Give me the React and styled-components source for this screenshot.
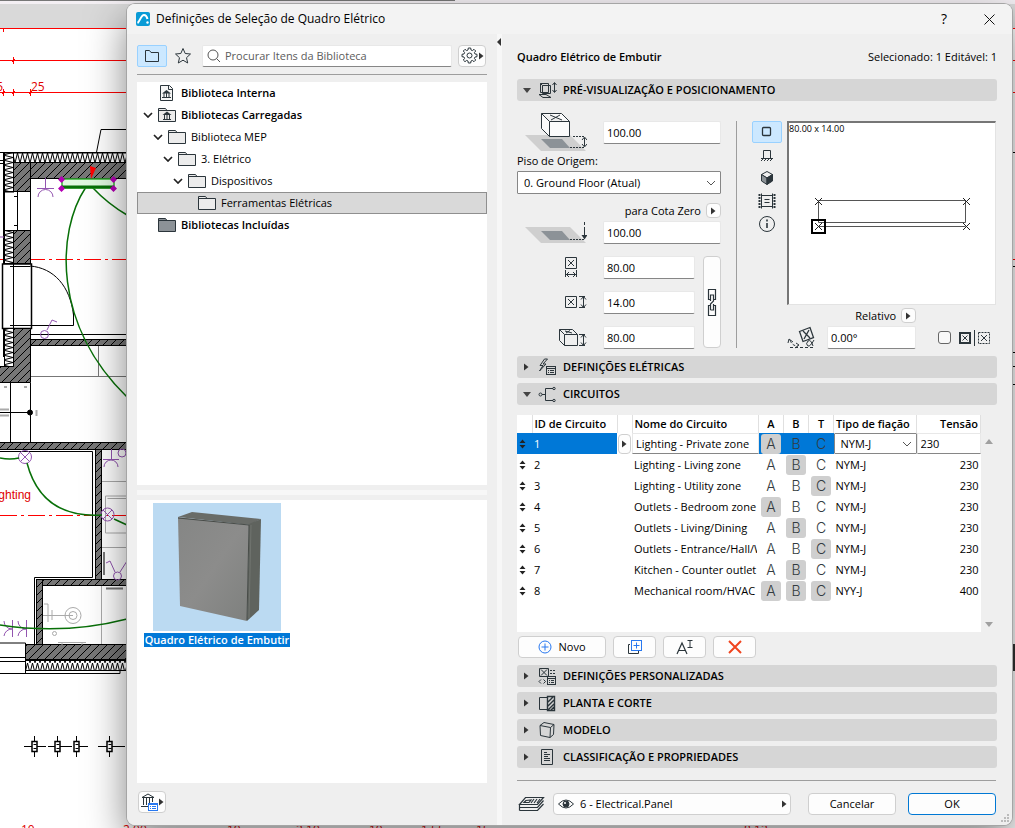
import React, { useState } from "react";
import styled, { createGlobalStyle } from "styled-components";

const GlobalStyle = createGlobalStyle`
  * {
    box-sizing: border-box;
  }

  body {
    margin: 0;
    color: #000;
    font-family: "Open Sans", "Noto Sans", sans-serif;
    font-size: 11px;
    line-height: 16px;
  }

  button,
  input,
  select {
    margin: 0;
    color: inherit;
    font: inherit;
  }

  svg {
    display: block;
    flex: none;
  }
`;

const Desktop = styled.div`
  position: relative;
  display: flex;
  min-height: 100vh;
  padding: 4px 3px 3px 127px;
  overflow: hidden;
  background: #fff;
`;

const PlanDrawing = styled.svg`
  position: absolute;
  top: 0;
  left: 0;
`;

const Dialog = styled.main`
  position: relative;
  display: flex;
  flex: 1;
  flex-direction: column;
  min-width: 0;
  overflow: hidden;
  border-radius: 8px;
  background: #efefef;
`;

const DialogShadow = styled.div`
  display: flex;
  flex: 1;
  min-width: 0;
  position: relative;
  border-radius: 8px;
  box-shadow:
    0 0 0 1px #a5a5a5,
    0 16px 40px rgba(0, 0, 0, 0.5);
`;

const TitleBar = styled.header`
  display: flex;
  align-items: center;
  gap: 6px;
  height: 30px;
  padding: 0 11px 0 9px;
  background: #f3f3f3;
`;

const Title = styled.h1`
  flex: 1;
  margin: 0;
  font-size: 12px;
  font-weight: 400;
`;

const TitleButton = styled.button`
  display: grid;
  place-items: center;
  width: 24px;
  height: 24px;
  margin-left: 15px;
  padding: 0;
  border: 0;
  background: none;
  font-size: 14px;
`;

const Columns = styled.div`
  display: flex;
  flex: 1;
`;

const LibraryPane = styled.section`
  display: flex;
  flex: 0 0 370px;
  flex-direction: column;
  padding: 10px 10px 9px;
`;

const PaneSplitter = styled.div`
  width: 5px;
  background: #f7f7f7;
`;

const Toolbar = styled.div`
  display: flex;
  align-items: center;
  gap: 6px;
  height: 31px;
  padding: 0 1px 7px 0;
  border-bottom: 1px solid #9d9d9d;
`;

const ToolButton = styled.button`
  display: grid;
  place-items: center;
  width: ${(props) => (props.$narrow ? "18px" : "30px")};
  height: 22px;
  padding: 0;
  border: 1px solid ${(props) => (props.$active ? "#99d1ff" : "transparent")};
  border-radius: 2px;
  background: ${(props) => (props.$active ? "#cce8ff" : "none")};
`;

const PlainButton = styled.button`
  display: flex;
  align-items: center;
  justify-content: center;
  gap: ${(props) => props.$gap || "0"};
  width: ${(props) => props.$width};
  height: ${(props) => props.$height || "22px"};
  padding: 0;
  border: 1px solid ${(props) => (props.$primary ? "#0078d4" : "#cfcfcf")};
  border-radius: 4px;
  background: #fdfdfd;
`;

const SearchBox = styled.label`
  display: flex;
  flex: 1;
  align-items: center;
  gap: 4px;
  height: 22px;
  margin-left: 5px;
  padding-left: 4px;
  border: 1px solid #e8e8e8;
  border-bottom-color: #868686;
  border-radius: 2px;
  background: #fff;
`;

const SearchInput = styled.input`
  flex: 1;
  min-width: 0;
  padding: 0;
  border: 0;
  background: none;

  &::placeholder {
    color: #5c5c5c;
    opacity: 1;
  }
`;

const Tree = styled.ul`
  height: 403px;
  margin: 7px 0 0;
  padding: 0;
  background: #fff;
  list-style: none;
`;

const TreeRow = styled.li`
  display: flex;
  align-items: center;
  gap: 5px;
  height: 22px;
  padding-left: ${(props) => 6 + props.$level * 10}px;
  background: ${(props) => (props.$selected ? "#d9d9d9" : "none")};
  box-shadow: ${(props) =>
    props.$selected ? "inset 0 0 0 1px #8f8f8f" : "none"};
  font-weight: ${(props) => (props.$bold ? 600 : 400)};
`;

const TreeChevron = styled.span`
  width: 10px;
`;

const ListSplitter = styled.div`
  height: 5px;
  margin: 5px 0;
  background: #f7f7f7;
`;

const ItemList = styled.div`
  flex: 1;
  padding: 3px 8px;
  background: #fff;
`;

const Item = styled.figure`
  display: flex;
  flex-direction: column;
  align-items: center;
  gap: 2px;
  width: 144px;
  margin: 0;
`;

const ItemName = styled.figcaption`
  padding: 0 1px;
  background: #0078d7;
  color: #fff;
  font-weight: 600;
  line-height: 14px;
  white-space: nowrap;
`;

const PaneFooter = styled.div`
  padding: 8px 1px 3px;
`;

const SettingsPane = styled.section`
  display: flex;
  flex: 1;
  flex-direction: column;
  min-width: 0;
  padding: 10px 15px;
`;

const Summary = styled.div`
  display: flex;
  align-items: center;
  justify-content: space-between;
  height: 26px;
  margin-bottom: 9px;

  strong {
    font-weight: 600;
  }
`;

const SectionHeader = styled.button`
  display: flex;
  align-items: center;
  width: 100%;
  height: 22px;
  margin-bottom: 5px;
  padding: 0 5px;
  border: 0;
  border-radius: 3px;
  background: #d6d6d6;
  font-weight: 600;
  text-align: left;
`;

const SectionArrow = styled.span`
  display: grid;
  place-items: center;
  width: 9px;
`;

const SectionIcon = styled.span`
  display: grid;
  place-items: center;
  width: 32px;
`;

const Placement = styled.div`
  display: grid;
  grid-template-columns: 204px 1px minmax(0, 1fr);
  gap: 15px;
  height: 250px;
  margin-right: 1px;
`;

const PlacementDivider = styled.div`
  margin: 15px 0 8px;
  background: #9d9d9d;
`;

const Fields = styled.div`
  display: flex;
  flex-direction: column;
  padding-top: 5px;
`;

const FieldRow = styled.div`
  display: flex;
  align-items: center;
  gap: 8px;
  height: ${(props) => props.$height};
`;

const FieldIcon = styled.span`
  display: flex;
  justify-content: flex-end;
  flex: 0 0 78px;
  padding-right: 8px;
`;

const TextInput = styled.input`
  flex: ${(props) => (props.$width ? "none" : 1)};
  width: ${(props) => props.$width || "100%"};
  min-width: 0;
  height: 23px;
  padding: 0 3px;
  border: 1px solid #e8e8e8;
  border-bottom-color: #868686;
  border-radius: 2px;
  background: #fff;
`;

const FloorLabel = styled.label`
  height: 18px;
`;

const SelectFrame = styled.div`
  display: grid;
  grid-template-columns: minmax(0, 1fr) 18px;
  align-items: center;
  width: 100%;
  height: ${(props) => props.$height};
  border: 1px solid #868686;
  border-radius: 1px;
  background: #fff;

  svg {
    grid-area: 1 / 2;
    justify-self: center;
    pointer-events: none;
  }
`;

const Select = styled.select`
  grid-area: 1 / 1 / 2 / 3;
  width: 100%;
  height: 100%;
  padding: 0 6px;
  border: 0;
  appearance: none;
  background: none;
`;

const MenuRow = styled.div`
  display: flex;
  align-items: center;
  justify-content: flex-end;
  gap: 5px;
  height: ${(props) => props.$height};
  padding-top: ${(props) => props.$top || "0"};
  padding-right: ${(props) => props.$inset || "0"};
`;

const SizeGroup = styled.div`
  display: flex;
  gap: 8px;
  padding-top: 6px;
`;

const SizeFields = styled.div`
  flex: 1;
`;

const ChainButton = styled(PlainButton)`
  width: 18px;
  height: 92px;
  margin-top: 6px;
`;

const ViewArea = styled.div`
  display: grid;
  grid-template-columns: 30px minmax(0, 1fr);
  grid-template-rows: 184px auto;
  column-gap: 5px;
  padding-top: 15px;
`;

const ViewModes = styled.div`
  display: flex;
  flex-direction: column;
  gap: 1px;
`;

const Preview = styled.div`
  border: 1px solid #e3e3e3;
  border-top: 2px solid #767676;
  border-left: 2px solid #767676;
  background: #fff;
  font-size: 9px;
  line-height: 12px;
`;

const AngleArea = styled.div`
  grid-column: 2;
`;

const AngleRow = styled.div`
  display: flex;
  align-items: center;
  gap: 8px;
  height: 23px;
`;

const MirrorLabel = styled.label`
  display: flex;
  align-items: center;
  gap: 7px;
  margin-left: 14px;
`;

const CheckBox = styled.input`
  width: 13px;
  height: 13px;
  margin: 0;
  border: 1px solid #666;
  border-radius: 3px;
  appearance: none;
  background: #f8f8f8;
`;

const CircuitArea = styled.div`
  display: flex;
  gap: 2px;
  margin-top: 5px;
  padding-right: 2px;
`;

const TableFrame = styled.div`
  flex: 1;
  min-width: 0;
  height: 217px;
  background: #fff;
`;

const Table = styled.table`
  width: 100%;
  border-collapse: collapse;
  table-layout: fixed;
`;

const Col = styled.col`
  width: ${(props) => props.$width};
`;

const HeadCell = styled.th`
  height: 18px;
  padding: 0 2px;
  overflow: hidden;
  border-right: 1px solid #e0e0e0;
  font-weight: 600;
  line-height: 18px;
  text-align: ${(props) => props.$align || "left"};
  white-space: nowrap;
`;

const Cell = styled.td`
  height: 21px;
  padding: ${(props) => (props.$flush ? "0" : "0 2px")};
  overflow: hidden;
  background: ${(props) => (props.$marked ? "#0078d7" : "none")};
  color: ${(props) => (props.$marked ? "#fff" : "#000")};
  line-height: 20px;
  text-align: ${(props) => props.$align || "left"};
  white-space: nowrap;
`;

const CellText = styled.div`
  overflow: hidden;
`;

const RowMenuButton = styled(PlainButton)`
  width: 13px;
  height: 20px;
  margin: 0 auto;
`;

const CellInput = styled.input`
  display: block;
  width: 100%;
  height: 21px;
  padding: 0 3px;
  border: 1px solid #e8e8e8;
  border-bottom-color: #868686;
  background: #fff;
`;

const PhaseButton = styled.button`
  display: grid;
  place-items: center;
  width: 20px;
  height: 20px;
  margin: 0 auto;
  padding: 0;
  border: 0;
  border-radius: 3px;
  background: ${(props) => (props.$on ? "#cfcfcf" : "none")};
  color: #333b40;
  font-family: Inter, "Open Sans", sans-serif;
  font-size: 14px;
  font-weight: 300;
  line-height: 20px;
`;

const ScrollArrows = styled.div`
  display: flex;
  flex-direction: column;
  align-items: center;
  justify-content: space-between;
  width: 12px;
  padding: 24px 0 5px;
`;

const CircuitActions = styled.div`
  display: flex;
  gap: 7px;
  padding: 4px 1px 7px;
`;

const Footer = styled.footer`
  display: flex;
  align-items: center;
  gap: 12px;
  margin: auto 1px 0 0;
  padding-top: 12px;
  border-top: 1px solid #9d9d9d;
`;

const LayerButton = styled(PlainButton)`
  flex: 1;
  gap: 6px;
  margin-left: -4px;
  margin-right: 5px;
  padding: 0 3px 0 4px;

  span {
    flex: 1;
    text-align: left;
  }
`;

const ResizeGrip = styled.svg`
  position: absolute;
  right: 2px;
  bottom: 2px;
`;

const INK = "#2b353b";

const ArrowRight = ({ color = "#333" }) => (
  <svg width="5" height="8">
    <path d="M0 0.5 L4.5 4 L0 7.5 Z" fill={color} />
  </svg>
);

const ArrowDown = ({ color = "#444", up = false }) => (
  <svg width="8" height="5">
    <path d={up ? "M0 5 L4 0 L8 5 Z" : "M0 0 L8 0 L4 5 Z"} fill={color} />
  </svg>
);

const Chevron = ({ bold }) => (
  <svg width="10" height="6" fill="none">
    <path
      d="M1 1 L5 5 L9 1"
      stroke={bold ? "#222" : "#555"}
      strokeWidth={bold ? 1.7 : 1}
    />
  </svg>
);

const FolderIcon = ({ kind }) => {
  if (kind === "internal") {
    return (
      <svg width="18" height="18" fill="none" stroke={INK}>
        <path d="M2.5 1.5 H11.5 L14.5 4.5 V16.5 H2.5 Z" fill="#f5f5f5" />
        <path d="M10.5 1.5 V5.5 H14.5" />
        <path d="M8.5 6 L13 9.5 H4 Z" fill={INK} stroke="none" />
        <path d="M6 9 V13 M8.5 9 V13 M11 9 V13 M4 13.5 H13" />
      </svg>
    );
  }
  return (
    <svg width="18" height="18" fill="none" stroke={INK}>
      <path
        d="M0.5 15.5 V2.5 H7.5 L9 4.5 H17.5 V15.5 Z"
        fill={kind === "dark" ? "#8c9297" : "#ececec"}
      />
      <path d="M1 4.5 H9" />
      {kind === "library" && (
        <>
          <path d="M9 5.5 L13.5 9 H4.5 Z" fill={INK} stroke="none" />
          <path d="M6.5 9 V13 M9 9 V13 M11.5 9 V13 M5 13.5 H13" />
        </>
      )}
    </svg>
  );
};

const AppLogo = () => (
  <svg width="14" height="14" fill="none">
    <rect width="14" height="14" rx="2" fill="#0a9bd6" />
    <path
      d="M1.5 11 C3.5 10 5 3 8 3 C10.5 3 11 5 11.5 7"
      stroke="#fff"
      strokeWidth="2"
    />
    <circle cx="11.5" cy="10.5" r="1.2" fill="#fff" />
  </svg>
);

const GearIcon = () => (
  <svg width="17" height="17" viewBox="0 0 17 17" fill="none" stroke={INK}>
    <path d="M7.3 1 H9.7 L10 3 L11.4 3.6 L13 2.3 L14.7 4 L13.4 5.6 L14 7 L16 7.3 V9.7 L14 10 L13.4 11.4 L14.7 13 L13 14.7 L11.4 13.4 L10 14 L9.7 16 H7.3 L7 14 L5.6 13.4 L4 14.7 L2.3 13 L3.6 11.4 L3 10 L1 9.7 V7.3 L3 7 L3.6 5.6 L2.3 4 L4 2.3 L5.6 3.6 L7 3 Z" />
    <circle cx="8.5" cy="8.5" r="2.5" />
  </svg>
);

const LibraryManagerIcon = () => (
  <svg width="19" height="19" fill="none" stroke={INK}>
    <path d="M2 4.5 L8 1 L14 4.5 Z M3.5 5 V12 M6.5 5 V12 M9.5 5 V10 M12.5 5 V9 M1 13.5 H8" />
    <rect x="8.5" y="10.5" width="9" height="7" fill="#fff" stroke="#2878f0" />
    <path
      d="M9 11.5 H17 M10 13.5 H11 M12 13.5 H16 M10 15.5 H11 M12 15.5 H16"
      stroke="#2878f0"
    />
  </svg>
);

const CabinetPicture = () => (
  <svg width="128" height="128">
    <defs>
      <linearGradient id="door" x1="0" y1="0" x2="1" y2="1">
        <stop offset="0" stopColor="#858685" />
        <stop offset="0.5" stopColor="#8c8c8b" />
        <stop offset="1" stopColor="#7e807e" />
      </linearGradient>
    </defs>
    <rect width="128" height="128" fill="#bbdaf2" />
    <path d="M25 14 L39 9 L108 16 L97 22 Z" fill="#696c68" />
    <path d="M96 21 L108 16 L106 107 L94 118 Z" fill="#5f635e" />
    <path d="M25 14 L96 22 L94 118 L27 103 Z" fill="url(#door)" />
    <path d="M25 15 L96 22 L94 117" fill="none" stroke="#484c48" />
    <path d="M98 22 L96 115" fill="none" stroke="#70746f" />
  </svg>
);

const SECTION_ICONS = {
  preview: (
    <>
      <path d="M2.5 2.5 H10.5 V11.5 H2.5 Z M4.5 4.5 H12.5 V12.5 H4.5 Z M2.5 2.5 L4.5 4.5 M1 13.5 H8 L13 16.5 H5 Z" />
      <path d="M16.5 2 V11 M14.5 4 L16.5 1.5 L18.5 4 M14.5 9 L16.5 11.5 L18.5 9" />
    </>
  ),
  electric: (
    <>
      <path d="M6.5 1 L2 7.5 H5 L1.5 13 L8 6 H5 L9.5 1 Z" />
      <rect x="8.5" y="8.5" width="9" height="8" />
      <path d="M9 10.5 H17 M10 12.5 H11 M12 12.5 H16 M10 14.5 H11 M12 14.5 H16" />
    </>
  ),
  circuits: (
    <>
      <circle cx="2.5" cy="9.5" r="1.5" />
      <path d="M4 9.5 H7.5 M15 3.5 H7.5 V15.5 H15" />
      <circle cx="16" cy="3.5" r="1.2" />
      <circle cx="16" cy="15.5" r="1.2" />
    </>
  ),
  custom: (
    <>
      <path d="M1.5 1.5 H10.5 V9.5 H1.5 Z M3 2.5 L9 8.5 M9 2.5 L3 8.5 M12 3.5 H14 M15 3.5 H17 M12 6.5 H14 M15 6.5 H17" />
      <path d="M3 12.5 L1 14.5 L3 16.5 M5.5 12.5 L7.5 14.5 L5.5 16.5" />
      <rect x="9.5" y="9.5" width="8" height="8" fill="#d6d6d6" />
      <path d="M10 11.5 H17 M11 13.5 H12 M13 13.5 H16 M11 15.5 H12 M13 15.5 H16" />
    </>
  ),
  plan: (
    <>
      <path d="M9.5 3.5 H1.5 V15.5 H9.5" />
      <path
        d="M9.5 2.5 H16.5 V16.5 H9.5 Z M10 8 L15 3 M10 12 L16 6 M10 16 L16 10 M13 16 L16 13"
        strokeWidth="1.4"
      />
    </>
  ),
  model: (
    <path d="M2 4.5 L6 1.5 L16 3.5 L12.5 6.5 Z M2 4.5 L2.5 14.5 L12 16.5 L12.5 6.5 M16 3.5 L15.5 13.5 L12 16.5" />
  ),
  classification: (
    <path d="M3.5 1.5 H14.5 V16.5 H3.5 Z M6 4.5 H9 M6 6.5 H12 M6 8.5 H10 M6 10.5 H12 M6 12.5 H12" />
  ),
};

const ElevationIcon = ({ box }) => (
  <svg width="62" height={box ? 40 : 24} fill="none" stroke={INK}>
    <g transform={box ? "translate(0 17)" : ""}>
      <path d="M0 6 H45 L61 22 H16 Z" fill="#cfcfcf" stroke="none" />
      <path d="M16 10 H37 L45 19 H25 Z" fill="#8c9297" stroke="none" />
      {box ? (
        <>
          <path d="M48 7.5 H60 M45 18.5 H60" strokeDasharray="2 1" />
          <path d="M59.5 9 V17 M57 11 L59.5 8 L62 11 M57 15 L59.5 18 L62 15" />
        </>
      ) : (
        <>
          <path d="M45 18.5 H60" strokeDasharray="2 1" />
          <path d="M59.5 1 V4 M59.5 6 V17" />
          <path d="M56.5 14 L59.5 18.5 L62.5 14 Z" fill={INK} stroke="none" />
        </>
      )}
    </g>
    {box && (
      <path
        d="M16.5 1.5 H36.5 L44.5 9.5 V24.5 H24.5 L16.5 16.5 Z M16.5 1.5 L24.5 9.5 H44.5 M24.5 9.5 V24.5 M25 3 L37 8 M35 3 L26 8"
        fill="#fbfbfb"
      />
    )}
  </svg>
);

const SizeIcon = ({ kind }) => {
  const icons = {
    width: (
      <path d="M6.5 0.5 H17.5 V11.5 H6.5 Z M9 3 L15 9 M15 3 L9 9 M6.5 13 V20 M17.5 13 V20 M7 17.5 H17 M10 15 L7.5 17.5 L10 20 M14 15 L16.5 17.5 L14 20" />
    ),
    depth: (
      <path d="M6.5 4.5 H17.5 V15.5 H6.5 Z M9 7 L15 13 M15 7 L9 13 M20 4.5 H26 M20 15.5 H26 M24.5 5 V15 M22 7.5 L24.5 4.5 L27 7.5 M22 12.5 L24.5 15.5 L27 12.5" />
    ),
    height: (
      <path d="M0.5 2.5 H13.5 L18.5 7.5 V18.5 H5.5 L0.5 13.5 Z M0.5 2.5 L5.5 7.5 H18.5 M5.5 7.5 V18.5 M6 4 L13 6 M11 3.5 L7 6 M20 7.5 H26 M20 18.5 H26 M24.5 8 V18 M22 10.5 L24.5 7.5 L27 10.5 M22 15.5 L24.5 18.5 L27 15.5" />
    ),
  };
  return (
    <svg width="28" height="21" fill="none" stroke={INK}>
      {icons[kind]}
    </svg>
  );
};

const VIEW_MODES = [
  {
    name: "Planta",
    icon: <rect x="4.5" y="4.5" width="8" height="8" rx="1" strokeWidth="1.3" />,
  },
  {
    name: "Alçado",
    icon: (
      <path d="M5.5 12 V4.5 H12.5 V12 M3 12.5 H15 M3 15 L5 13 M6 15 L8 13 M9 15 L11 13 M12 15 L14 13" />
    ),
  },
  {
    name: "3D",
    icon: (
      <>
        <path d="M3.5 5.5 L9 2.5 L14.5 5.5 L9 9 Z" fill="#eee" />
        <path d="M3.5 5.5 L9 9 V15.5 L3.5 12 Z" fill="#8c9297" />
        <path d="M14.5 5.5 L9 9 V15.5 L14.5 12 Z" fill={INK} />
      </>
    ),
  },
  {
    name: "Imagem",
    icon: (
      <>
        <path d="M1.5 2 V16 M16.5 2 V16" strokeWidth="2" strokeDasharray="2 1" />
        <path d="M3.5 1.5 V16.5 M14.5 1.5 V16.5 M3.5 3.5 H14.5 M3.5 14.5 H14.5 M6.5 7.5 H11.5 M6.5 10.5 H11.5" />
      </>
    ),
  },
  {
    name: "Informação",
    icon: (
      <>
        <circle cx="9" cy="9" r="7.5" />
        <path d="M9 8 V13 M9 4.5 V6.5" strokeWidth="1.6" />
      </>
    ),
  },
];

const CROSS = "l7 7 m0 -7 l-7 7";

const SymbolPreview = () => (
  <svg width="100%" height="166" viewBox="0 0 206 166" fill="none" stroke="#222">
    <path d="M29.5 65.5 H176.5 V87.5 H29.5 Z M29.5 91.5 H176.5" stroke="#555" />
    <path d={`M26 63 ${CROSS} M174 63 ${CROSS} M26 88 ${CROSS} M174 88 ${CROSS}`} />
    <rect x="23" y="85" width="13" height="13" stroke="#000" strokeWidth="2" />
  </svg>
);

const sections = [
  ["custom", "DEFINIÇÕES PERSONALIZADAS"],
  ["plan", "PLANTA E CORTE"],
  ["model", "MODELO"],
  ["classification", "CLASSIFICAÇÃO E PROPRIEDADES"],
];

const tree = [
  { name: "Biblioteca Interna", level: 0, kind: "internal", bold: true },
  { name: "Bibliotecas Carregadas", level: 0, kind: "library", bold: true, open: true },
  { name: "Biblioteca MEP", level: 1, open: true },
  { name: "3. Elétrico", level: 2, open: true },
  { name: "Dispositivos", level: 3, open: true },
  { name: "Ferramentas Elétricas", level: 4 },
  { name: "Bibliotecas Incluídas", level: 0, kind: "dark", bold: true },
];

const circuits = [
  { id: 1, name: "Lighting - Private zone", phases: "A", wiring: "NYM-J", voltage: 230 },
  { id: 2, name: "Lighting - Living zone", phases: "B", wiring: "NYM-J", voltage: 230 },
  { id: 3, name: "Lighting - Utility zone", phases: "C", wiring: "NYM-J", voltage: 230 },
  { id: 4, name: "Outlets - Bedroom zone", phases: "A", wiring: "NYM-J", voltage: 230 },
  { id: 5, name: "Outlets - Living/Dining", phases: "B", wiring: "NYM-J", voltage: 230 },
  { id: 6, name: "Outlets - Entrance/Hall/W", phases: "C", wiring: "NYM-J", voltage: 230 },
  { id: 7, name: "Kitchen - Counter outlet", phases: "B", wiring: "NYM-J", voltage: 230 },
  { id: 8, name: "Mechanical room/HVAC", phases: "ABC", wiring: "NYY-J", voltage: 400 },
];

const FloorPlan = () => (
  <PlanDrawing width="1015" height="828" fill="none" stroke="#000">
    <defs>
      <pattern id="masonry" width="8" height="8" patternUnits="userSpaceOnUse">
        <rect width="8" height="8" fill="#777" stroke="none" />
        <path d="M-2 10 L10 -2 M-2 2 L2 -2 M6 10 L10 6" />
      </pattern>
      <pattern id="zigzag" width="5" height="10" y="3" patternUnits="userSpaceOnUse">
        <rect width="5" height="10" fill="#fff" stroke="none" />
        <path d="M0 10 L2.5 0 L5 10" />
      </pattern>
      <pattern id="zigzagV" width="10" height="5" x="3" patternUnits="userSpaceOnUse">
        <rect width="10" height="5" fill="#fff" stroke="none" />
        <path d="M0 0 L10 2.5 L0 5" />
      </pattern>
    </defs>
    <rect width="1015" height="28" fill="#d9d9d9" stroke="none" />
    <rect width="1015" height="4" fill="#f3eff3" stroke="none" />
    <path d="M0 0.5 H455" stroke="#777" />

    <g stroke="#f00">
      <path d="M0 28.5 H127 M0 60.5 H127 M0 92.5 H127 M13.5 57 V64 M3.5 28 V32 M3.5 89 V96 M13.5 89 V96 M30.5 89 V96 M12 62 L15 59 M2 94 L5 91 M12 94 L15 91 M29 94 L32 91" />
      <path d="M0 259.5 H127 M0 515.5 H127" strokeDasharray="17 4 3 4" />
      <path d="M1012 28.5 H1015 M1012 60.5 H1015 M1012 92.5 H1015 M1012 259.5 H1015" />
    </g>

    <path d="M94 165 L101 129.5 H127 M0 152.5 H127" />
    <rect x="13.5" y="153" width="114" height="10" fill="url(#zigzag)" />
    <rect x="4.5" y="153" width="9" height="39" fill="url(#zigzagV)" />
    <rect x="13.5" y="162.5" width="114" height="16" fill="url(#masonry)" />
    <rect x="13.5" y="162.5" width="17" height="29" fill="url(#masonry)" />
    <path d="M4.5 191.5 H30.5 M4.5 230.5 H30.5 M30.5 191 V230 M17.5 191 V230 M14 196.5 H17 M14 225.5 H17 M0 160.5 H4 M0 163.5 H4" />
    <rect x="4.5" y="230.5" width="9" height="33" fill="url(#zigzagV)" />
    <rect x="13.5" y="230.5" width="17" height="33" fill="url(#masonry)" />
    <path d="M2.5 264 H31.5 V328.5 H2.5 Z" strokeWidth="1.5" fill="#fff" />
    <path d="M13.5 264 V328 M10 266.5 H30 M10 325.5 H73.5 V310 M30 266 C54 268 70 286 73.5 315" />
    <path d="M4 153 V264 M4 328 V357" strokeWidth="2" />
    <rect x="4.5" y="328.5" width="9" height="38" fill="url(#zigzagV)" />
    <path d="M13.5 328.5 H30.5 V382.5 H-1 V366.5 H13.5 Z" fill="url(#masonry)" />
    <path d="M31 334.5 H127" />
    <rect x="30.5" y="339.5" width="97" height="6" fill="url(#masonry)" />
    <path d="M31 376.5 H127 M98.5 346 V376" stroke="#777" />
    <path d="M10.5 383 V442 M30.5 383 V442 M0 412.5 H30" />
    <circle cx="30" cy="412.5" r="2.5" fill="#000" />
    <path
      d="M0 409.5 H9 M0 415.5 H9 M36.5 410 V416 M4 387 H7 M24 387 H27"
      stroke="#aaa"
      strokeWidth="2"
    />

    <rect x="-1" y="442.5" width="129" height="7" fill="url(#masonry)" />
    <path d="M0 451.5 H92.5 V577.5 H34.5 V644" />
    <rect x="95.5" y="449.5" width="6" height="130" fill="url(#masonry)" />
    <rect x="36.5" y="579.5" width="91" height="6" fill="url(#masonry)" />
    <rect x="36.5" y="579.5" width="6" height="65" fill="url(#masonry)" />
    <rect x="25.5" y="644.5" width="102" height="15" fill="url(#masonry)" />
    <rect x="25.5" y="660.5" width="102" height="10" fill="url(#zigzag)" />
    <path d="M0 643 H25.5 V673.5 M0 657.5 H25 M0 661.5 H25 M0 673.5 H120 V671 M26 670.5 H127" />

    <g stroke="#aaa">
      <path d="M102 481.5 H127 M102 547.5 H127 M105.5 496 H127 M105.5 496 V533 H127 M107.5 498.5 H127 M101.5 586 V644 M43 615.5 H73 M44 604 H48 V622 M52 610 V620 M58 642.5 H86 M62 642 V645 M82 642 V645" />
      <circle cx="73" cy="615.5" r="8" />
      <circle cx="73" cy="615.5" r="4" />
      <circle cx="54.5" cy="633.5" r="2" />
      <path d="M104 552 V575 M106 588.5 H123" stroke="#777" strokeWidth="2" />
    </g>
    <g stroke="#9355b0">
      <path d="M37 188.5 H54 M45.5 178 V188 M38 197 A7.5 7.5 0 0 1 53 197 M47 330 L52 320 L57 322" />
      <circle cx="44.5" cy="334.5" r="4" />
      <circle cx="25" cy="457" r="6.5" />
      <path d="M20.5 452.5 L29.5 461.5 M29.5 452.5 L20.5 461.5" />
      <circle cx="107.5" cy="514.5" r="6.5" />
      <path d="M103 510 L112 519 M112 510 L103 519 M103 459.5 H119 M111.5 449 V459 M104 467 A7 7 0 0 1 118 467 M106 563 L110 561 L115 572 M120 572 L127 561" />
      <circle cx="117.5" cy="576" r="4" />
      <circle cx="122" cy="453" r="4" />
      <path d="M12.5 620 V637 M4 621 A8 8 0 0 0 12 629 A8 8 0 0 0 4 636 M26.5 620 V637 M18 621 A8 8 0 0 0 26 629 A8 8 0 0 0 18 636 M0 237 H4" />
    </g>
    <g stroke="#087008" strokeWidth="1.5">
      <path d="M86 187 C56 232 53 325 127 397 M92 187 Q108 204 127 215 M0 458 Q10 460 19 458 M27 463 C38 505 68 517 102 515 M114 519 L127 525 M0 625 Q65 635 127 619" />
      <rect x="62" y="179" width="52" height="9" fill="#dff8df" stroke="#35b135" />
      <path d="M62 187 H114" strokeWidth="3" />
    </g>
    <path d="M90 166 L96 168 L91 179 Z" fill="#f00" stroke="none" />
    <path
      d="M61.5 176 l3.5 3.5 l-3.5 3.5 l-3.5 -3.5 z M61.5 185 l3.5 3.5 l-3.5 3.5 l-3.5 -3.5 z M113.5 176 l3.5 3.5 l-3.5 3.5 l-3.5 -3.5 z M113.5 185 l3.5 3.5 l-3.5 3.5 l-3.5 -3.5 z"
      fill="#b400b4"
      stroke="none"
    />

    <path d="M24 746.5 H46 M48 746.5 H72 M75 746.5 H88 M98 746.5 H125 M126.5 741 V752" />
    {[34.5, 57.5, 76.5, 109.5].map((x) => (
      <g key={x}>
        <path d={`M${x} 736 V757`} />
        <rect x={x - 2.5} y="741.5" width="5" height="10" fill="#fff" strokeWidth="1.5" />
        <path d={`M${x - 1} 744.5 H${x + 2} M${x - 1} 748.5 H${x + 2}`} />
      </g>
    ))}
    <path d="M1012 152.5 H1015 M1012 266.5 H1015 M1012 352.5 H1015 M1012 366.5 H1015 M1012 384.5 H1015" />
    <rect x="1012" y="644" width="3" height="27" fill="#333" stroke="none" />

    <g fill="#e00000" stroke="none" fontFamily="Open Sans, sans-serif" fontSize="12">
      <text x="31" y="91">25</text>
      <text x="3" y="91" textAnchor="end">5</text>
      <text x="31" y="499" textAnchor="end" fontFamily="Liberation Sans, sans-serif">
        Lighting
      </text>
      <text x="21" y="834">10</text>
      <text x="123" y="834">2.00</text>
      <text x="227" y="834">10</text>
      <text x="296" y="834">2.10</text>
      <text x="369" y="834">10</text>
      <text x="421" y="834">1.55</text>
      <text x="476" y="834">15</text>
      <text x="744" y="834">8.12</text>
    </g>
  </PlanDrawing>
);

const Section = ({ icon, title, open, onToggle }) => (
  <SectionHeader type="button" aria-expanded={!!open} onClick={onToggle}>
    <SectionArrow>{open ? <ArrowDown /> : <ArrowRight />}</SectionArrow>
    <SectionIcon>
      <svg width="19" height="18" fill="none" stroke={INK}>
        {SECTION_ICONS[icon]}
      </svg>
    </SectionIcon>
    {title}
  </SectionHeader>
);

const Library = () => {
  const [selected, setSelected] = useState("Ferramentas Elétricas");

  return (
    <LibraryPane>
      <Toolbar>
        <ToolButton type="button" $active aria-label="Pastas">
          <svg width="16" height="14" fill="none" stroke={INK}>
            <path d="M1.5 12.5 V1.5 H5.5 L7 3.5 H14.5 V12.5 Z" />
          </svg>
        </ToolButton>
        <ToolButton type="button" $narrow aria-label="Favoritos">
          <svg width="18" height="18" fill="none" stroke={INK}>
            <path d="M9 1.5 L11.2 6.5 L16.5 7 L12.5 10.7 L13.7 16 L9 13.2 L4.3 16 L5.5 10.7 L1.5 7 L6.8 6.5 Z" />
          </svg>
        </ToolButton>
        <SearchBox>
          <svg width="14" height="14" fill="none" stroke="#555">
            <circle cx="6" cy="6" r="5" />
            <path d="M9.5 9.5 L13 13" />
          </svg>
          <SearchInput
            aria-label="Procurar"
            placeholder="Procurar Itens da Biblioteca"
          />
        </SearchBox>
        <PlainButton type="button" $width="28px" $gap="1px" aria-label="Opções">
          <GearIcon />
          <ArrowRight />
        </PlainButton>
      </Toolbar>
      <Tree role="tree">
        {tree.map((node) => (
          <TreeRow
            key={node.name}
            role="treeitem"
            $level={node.level}
            $bold={node.bold}
            $selected={node.name === selected}
            aria-selected={node.name === selected}
            onClick={() => setSelected(node.name)}
          >
            <TreeChevron>{node.open && <Chevron bold />}</TreeChevron>
            <FolderIcon kind={node.kind} />
            <span>{node.name}</span>
          </TreeRow>
        ))}
      </Tree>
      <ListSplitter />
      <ItemList>
        <Item>
          <CabinetPicture />
          <ItemName>Quadro Elétrico de Embutir</ItemName>
        </Item>
      </ItemList>
      <PaneFooter>
        <PlainButton type="button" $width="28px" aria-label="Gestor de Bibliotecas">
          <LibraryManagerIcon />
          <ArrowRight />
        </PlainButton>
      </PaneFooter>
    </LibraryPane>
  );
};

const SIZES = [
  { kind: "width", label: "Largura", value: "80.00" },
  { kind: "depth", label: "Profundidade", value: "14.00" },
  { kind: "height", label: "Altura", value: "80.00" },
];

const PlacementPanel = () => {
  const [mode, setMode] = useState("Planta");

  return (
    <Placement>
      <Fields>
        <FieldRow $height="42px">
          <FieldIcon>
            <ElevationIcon box />
          </FieldIcon>
          <TextInput aria-label="Elevação ao piso" defaultValue="100.00" />
        </FieldRow>
        <FloorLabel htmlFor="floor">Piso de Origem:</FloorLabel>
        <SelectFrame $height="23px">
          <Select id="floor">
            <option>0. Ground Floor (Atual)</option>
          </Select>
          <Chevron />
        </SelectFrame>
        <MenuRow $height="27px" $top="6px">
          para Cota Zero
          <PlainButton type="button" $width="15px" $height="15px" aria-label="Referência">
            <ArrowRight />
          </PlainButton>
        </MenuRow>
        <FieldRow $height="23px">
          <FieldIcon>
            <ElevationIcon />
          </FieldIcon>
          <TextInput aria-label="Elevação à cota zero" defaultValue="100.00" />
        </FieldRow>
        <SizeGroup>
          <SizeFields>
            {SIZES.map(({ kind, label, value }) => (
              <FieldRow key={kind} $height="35px">
                <FieldIcon>
                  <SizeIcon kind={kind} />
                </FieldIcon>
                <TextInput aria-label={label} defaultValue={value} />
              </FieldRow>
            ))}
          </SizeFields>
          <ChainButton type="button" aria-label="Manter proporções">
            <svg width="10" height="29" fill="none" stroke={INK} strokeWidth="1.2">
              <path d="M3 11.5 H1.5 V1.5 H8.5 V11.5 H7 M3 17.5 H1.5 V27.5 H8.5 V17.5 H7 M3.5 22 V16 L6.5 13 V7 H3.5 V13 M3.5 22 H6.5 V16" />
            </svg>
          </ChainButton>
        </SizeGroup>
      </Fields>
      <PlacementDivider />
      <ViewArea>
        <ViewModes>
          {VIEW_MODES.map(({ name, icon }) => (
            <ToolButton
              key={name}
              type="button"
              $active={name === mode}
              aria-label={name}
              onClick={() => setMode(name)}
            >
              <svg width="18" height="18" fill="none" stroke={INK}>
                {icon}
              </svg>
            </ToolButton>
          ))}
        </ViewModes>
        <Preview>
          80.00 x 14.00
          <SymbolPreview />
        </Preview>
        <AngleArea>
          <MenuRow $height="21px" $inset="80px">
            Relativo
            <PlainButton type="button" $width="15px" $height="15px" aria-label="Tipo de ângulo">
              <ArrowRight />
            </PlainButton>
          </MenuRow>
          <AngleRow>
            <svg width="32" height="23" fill="none" stroke={INK}>
              <path
                d="M12.5 5.5 L23 1.5 L26.5 11.5 L16 15.5 Z M16 5 L23 12 M22 4 L17 13"
                strokeWidth="1.3"
              />
              <path d="M3 14 Q5 20 11 20 M3 21.5 H28" strokeDasharray="3 2" />
              <path d="M1 17 L2 13 L6 16 M9 17 L12 19 L8 22 M27 14 Q23 21 21 20 Q18 18 21 15 Q24 13 26 20" />
            </svg>
            <TextInput $width="89px" aria-label="Ângulo" defaultValue="0.00°" />
            <MirrorLabel>
              <CheckBox type="checkbox" aria-label="Espelhar" />
              <svg width="34" height="16" fill="none" stroke={INK}>
                <rect x="2" y="3" width="10" height="10" strokeWidth="2" />
                <path d="M4.5 5.5 L9.5 10.5 M9.5 5.5 L4.5 10.5 M16.5 0 V16 M23 5 L29 11 M29 5 L23 11" />
                <rect x="20.5" y="2.5" width="11" height="11" strokeDasharray="2 1" />
              </svg>
            </MirrorLabel>
          </AngleRow>
        </AngleArea>
      </ViewArea>
    </Placement>
  );
};

const CircuitRow = ({ circuit, editing }) => (
  <tr>
    <Cell $flush $marked={editing}>
      <svg width="11" height="10">
        <path d="M2.5 4 L5.5 0.5 L8.5 4 Z M2.5 6 L5.5 9.5 L8.5 6 Z" fill="#222" />
      </svg>
    </Cell>
    <Cell $marked={editing}>{circuit.id}</Cell>
    <Cell $flush>
      {editing && (
        <RowMenuButton type="button" aria-label="Menu do circuito">
          <ArrowRight />
        </RowMenuButton>
      )}
    </Cell>
    <Cell $flush={editing}>
      {editing ? (
        <CellInput aria-label="Nome do Circuito" defaultValue={circuit.name} />
      ) : (
        <CellText>{circuit.name}</CellText>
      )}
    </Cell>
    {["A", "B", "C"].map((phase) => (
      <Cell key={phase} $flush $marked={editing}>
        <PhaseButton
          type="button"
          $on={circuit.phases.includes(phase)}
          aria-pressed={circuit.phases.includes(phase)}
        >
          {phase}
        </PhaseButton>
      </Cell>
    ))}
    <Cell $flush={editing}>
      {editing ? (
        <SelectFrame $height="21px">
          <Select aria-label="Tipo de fiação">
            <option>NYM-J</option>
            <option>NYY-J</option>
          </Select>
          <Chevron />
        </SelectFrame>
      ) : (
        circuit.wiring
      )}
    </Cell>
    <Cell $flush={editing} $align="right">
      {editing ? (
        <CellInput aria-label="Tensão" defaultValue={circuit.voltage} />
      ) : (
        circuit.voltage
      )}
    </Cell>
  </tr>
);

const CircuitPanel = () => (
  <>
    <CircuitArea>
      <TableFrame>
        <Table>
          <colgroup>
            <Col $width="15px" />
            <Col $width="85px" />
            <Col $width="15px" />
            <Col />
            <Col $width="25px" />
            <Col $width="25px" />
            <Col $width="25px" />
            <Col $width="83px" />
            <Col $width="64px" />
          </colgroup>
          <thead>
            <tr>
              <HeadCell />
              <HeadCell>ID de Circuito</HeadCell>
              <HeadCell />
              <HeadCell>Nome do Circuito</HeadCell>
              <HeadCell $align="center">A</HeadCell>
              <HeadCell $align="center">B</HeadCell>
              <HeadCell $align="center">T</HeadCell>
              <HeadCell>Tipo de fiação</HeadCell>
              <HeadCell $align="right">Tensão</HeadCell>
            </tr>
          </thead>
          <tbody>
            {circuits.map((circuit) => (
              <CircuitRow
                key={circuit.id}
                circuit={circuit}
                editing={circuit.id === 1}
              />
            ))}
          </tbody>
        </Table>
      </TableFrame>
      <ScrollArrows>
        <ArrowDown color="#a0a0a0" up />
        <ArrowDown color="#a0a0a0" />
      </ScrollArrows>
    </CircuitArea>
    <CircuitActions>
      <PlainButton type="button" $width="88px" $gap="6px">
        <svg width="14" height="14" fill="none" stroke="#2878f0">
          <circle cx="7" cy="7" r="6" />
          <path d="M7 3.5 V10.5 M3.5 7 H10.5" />
        </svg>
        Novo
      </PlainButton>
      <PlainButton type="button" $width="43px" aria-label="Duplicar">
        <svg width="16" height="16" fill="none" stroke="#2878f0">
          <path d="M3 5.5 H1.5 V14.5 H11.5 V12" stroke={INK} />
          <rect x="4.5" y="1.5" width="10" height="10" />
          <path d="M9.5 3.5 V9.5 M6.5 6.5 H12.5" />
        </svg>
      </PlainButton>
      <PlainButton type="button" $width="43px" aria-label="Renomear">
        <svg width="18" height="16" fill="none" stroke={INK}>
          <path d="M1 15 L6 4 L11 15 M3 11.5 H9" strokeWidth="1.2" />
          <path d="M11.5 1.5 H16.5 M14 1.5 V8.5 M11.5 8.5 H16.5" />
        </svg>
      </PlainButton>
      <PlainButton type="button" $width="43px" aria-label="Eliminar">
        <svg width="14" height="14" fill="none" stroke="#f0441e" strokeWidth="2">
          <path d="M1 1 L13 13 M13 1 L1 13" />
        </svg>
      </PlainButton>
    </CircuitActions>
  </>
);

const App = () => {
  const [open, setOpen] = useState({ preview: true, circuits: true });

  const toggle = (key) => setOpen({ ...open, [key]: !open[key] });

  return (
    <Desktop>
      <GlobalStyle />
      <FloorPlan />
      <DialogShadow>
        <Dialog>
          <TitleBar>
            <AppLogo />
            <Title>Definições de Seleção de Quadro Elétrico</Title>
            <TitleButton type="button">?</TitleButton>
            <TitleButton type="button" aria-label="Fechar">
              <svg width="11" height="11" stroke="#111">
                <path d="M0.5 0.5 L10.5 10.5 M10.5 0.5 L0.5 10.5" />
              </svg>
            </TitleButton>
          </TitleBar>
          <Columns>
            <Library />
            <PaneSplitter>
              <svg width="5" height="16">
                <path d="M4 4 L0 8 L4 12 Z" fill="#333" />
              </svg>
            </PaneSplitter>
            <SettingsPane>
              <Summary>
                <strong>Quadro Elétrico de Embutir</strong>
                <span>Selecionado: 1 Editável: 1</span>
              </Summary>
              <Section
                icon="preview"
                title="PRÉ-VISUALIZAÇÃO E POSICIONAMENTO"
                open={open.preview}
                onToggle={() => toggle("preview")}
              />
              {open.preview && <PlacementPanel />}
              <Section icon="electric" title="DEFINIÇÕES ELÉTRICAS" />
              <Section
                icon="circuits"
                title="CIRCUITOS"
                open={open.circuits}
                onToggle={() => toggle("circuits")}
              />
              {open.circuits && <CircuitPanel />}
              {sections.map(([icon, title]) => (
                <Section key={icon} icon={icon} title={title} />
              ))}
              <Footer>
                <svg width="28" height="17" fill="none" stroke={INK} strokeWidth="1.2">
                  <path d="M8.5 1.5 H26.5 L20.5 8.5 H2.5 Z M2.5 11.5 H20.5 L26.5 4.5 M2.5 14.5 H20.5 L26.5 8 M2.5 8.5 V14.5 M9 4.5 L7 6.5 H12 L14 4 Z M17 3 L14 7 M20 3 L17 7 M23 3 L20 7" />
                </svg>
                <LayerButton type="button">
                  <svg width="16" height="12" fill="none" stroke={INK}>
                    <path d="M0.5 6 Q8 -2 15.5 6 Q8 14 0.5 6 Z" />
                    <circle cx="8" cy="6" r="3" fill={INK} />
                    <circle cx="7" cy="5" r="1" fill="#fff" stroke="none" />
                  </svg>
                  <span>6 - Electrical.Panel</span>
                  <ArrowRight />
                </LayerButton>
                <PlainButton type="button" $width="88px">
                  Cancelar
                </PlainButton>
                <PlainButton type="button" $width="88px" $primary>
                  OK
                </PlainButton>
              </Footer>
            </SettingsPane>
          </Columns>
          <ResizeGrip width="9" height="9" fill="#bbb">
            <path d="M6 0 h2 v2 h-2 z M3 3 h2 v2 h-2 z M6 3 h2 v2 h-2 z M0 6 h2 v2 h-2 z M3 6 h2 v2 h-2 z M6 6 h2 v2 h-2 z" />
          </ResizeGrip>
        </Dialog>
      </DialogShadow>
    </Desktop>
  );
};

export default App;
